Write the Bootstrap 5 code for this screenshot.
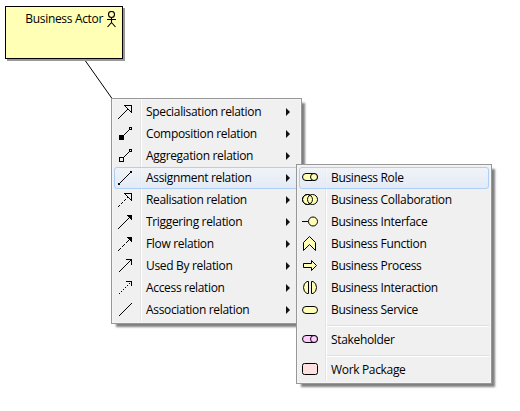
<!DOCTYPE html>
<html lang="en">
<head>
<meta charset="utf-8">
<title>Diagram relations</title>
<link href="https://cdn.jsdelivr.net/npm/bootstrap@5.3.0/dist/css/bootstrap.min.css" rel="stylesheet">
<style>
body{width:520px;height:411px;overflow:hidden;background:#fff;color:#000;font:12px/22px "Open Sans","Noto Sans",sans-serif;letter-spacing:-.33px}
.actor-node{left:5px;top:6px;width:118px;height:53px;border:1px solid #000;background:#ffffb5;box-shadow:2px 2px 0 #999;padding:1px 5px 0 0}
.actor-node svg{margin:3px 0 0 3px}
.link-line{left:84px;top:60px}
.ctx{min-width:0;margin:0;padding:2px;border:1px solid #979797;border-radius:0;background:linear-gradient(90deg,transparent 28px,#e2e3e3 28px,#e2e3e3 29px,#fff 29px,#fff 30px,transparent 30px) no-repeat 0 2px/100% calc(100% - 4px),#f0f0f0;box-shadow:inset 0 0 0 1px #f5f5f5,4px 4px 2px -1px rgba(0,0,0,.5);font-size:12px;color:#000}
.ctx-a{left:111px;top:98px;width:191px;height:226px}
.ctx-b{left:296px;top:164px;width:196px;height:220px}
.ctx .dropdown-item{height:22px;padding:0 8px 0 2px;line-height:20px;color:#000;border:1px solid transparent;border-radius:3px}
.ctx .dropdown-item.hot{border-color:#aecff7;background:linear-gradient(rgba(240,244,250,.8),rgba(224,233,247,.75))}
.ico{width:16px;height:16px;margin-right:13px;flex:none;overflow:visible;fill:none;stroke:#000;stroke-width:1}
.ctx-a .ico{shape-rendering:crispEdges}
.tri{width:4px;height:8px;fill:#111;margin-left:auto}
.y{fill:#ffffb5}
.pink{fill:#ffccff}
.rose{fill:#ffe0e0}
.sep{height:8px;margin:0 0 0 28px;padding-top:4px}
.sep::before{content:"";display:block;height:2px;background:linear-gradient(#e0e0e0 50%,#fff 50%)}
</style>
<script src="https://cdn.jsdelivr.net/npm/bootstrap@5.3.0/dist/js/bootstrap.bundle.min.js"></script>
</head>
<body class="position-relative m-0">
<svg class="link-line position-absolute" width="28" height="39"><path d="M1.500 1L28 38.500" stroke="#000"/></svg>
<div class="actor-node position-absolute d-flex justify-content-end align-items-start">
<span>Business Actor</span>
<svg width="11" height="17" fill="none" stroke="#000" stroke-width="1.100"><circle cx="5.500" cy="3.500" r="3"/><path d="M5.500 6.500V11.500L1.500 16M5.500 11.500L9.500 16M1 8.500H10"/></svg>
</div>

<div class="dropdown-menu show ctx ctx-a position-absolute">
<div class="dropdown-item d-flex align-items-center"><svg class="ico"><path d="M1 15L10.500 5.500M7.500 1.500H14.500V8.500Z"/></svg><span>Specialisation relation</span><svg class="tri"><path d="M0 0L4 4L0 8Z"/></svg></div>
<div class="dropdown-item d-flex align-items-center"><svg class="ico"><path d="M6.500 9.500L12.500 3.500"/><path fill="#000" d="M2.500 9.500h4v4h-4z"/><path d="M12.500 1.500h2v2h-2z"/></svg><span>Composition relation</span><svg class="tri"><path d="M0 0L4 4L0 8Z"/></svg></div>
<div class="dropdown-item d-flex align-items-center"><svg class="ico"><path d="M6.500 9.500L12.500 3.500M2.500 9.500h4v4h-4zM12.500 1.500h2v2h-2z"/></svg><span>Aggregation relation</span><svg class="tri"><path d="M0 0L4 4L0 8Z"/></svg></div>
<div class="dropdown-item hot d-flex align-items-center"><svg class="ico"><path d="M2 14L14 2"/><path fill="#000" stroke="none" d="M1 13h2v2H1zM13 1h2v2h-2z"/></svg><span>Assignment relation</span><svg class="tri"><path d="M0 0L4 4L0 8Z"/></svg></div>
<div class="dropdown-item d-flex align-items-center"><svg class="ico"><path stroke-dasharray="2.800 1.400" d="M1 15L10.500 5.500"/><path d="M7.500 1.500H14.500V8.500Z"/></svg><span>Realisation relation</span><svg class="tri"><path d="M0 0L4 4L0 8Z"/></svg></div>
<div class="dropdown-item d-flex align-items-center"><svg class="ico"><path d="M1 15L12 4"/><path fill="#000" d="M10.500 1.500h4v4z"/></svg><span>Triggering relation</span><svg class="tri"><path d="M0 0L4 4L0 8Z"/></svg></div>
<div class="dropdown-item d-flex align-items-center"><svg class="ico"><path stroke-dasharray="4.200 1.400" d="M1 15L12 4"/><path fill="#000" d="M10.500 1.500h4v4z"/></svg><span>Flow relation</span><svg class="tri"><path d="M0 0L4 4L0 8Z"/></svg></div>
<div class="dropdown-item d-flex align-items-center"><svg class="ico"><path d="M2 14L14.500 1.500M9 1.500H14.500V7"/></svg><span>Used By relation</span><svg class="tri"><path d="M0 0L4 4L0 8Z"/></svg></div>
<div class="dropdown-item d-flex align-items-center"><svg class="ico"><path stroke-dasharray="1.400 1.400" d="M2 14L14.500 1.500"/><path d="M9 1.500H14.500V6"/></svg><span>Access relation</span><svg class="tri"><path d="M0 0L4 4L0 8Z"/></svg></div>
<div class="dropdown-item d-flex align-items-center"><svg class="ico"><path d="M2 14L15 1"/></svg><span>Association relation</span><svg class="tri"><path d="M0 0L4 4L0 8Z"/></svg></div>
</div>

<div class="dropdown-menu show ctx ctx-b position-absolute">
<div class="dropdown-item hot d-flex align-items-center"><svg class="ico y"><rect x=".5" y="3.500" width="15" height="7" rx="3.500"/><ellipse cx="12" cy="7" rx="3.500" ry="3.500"/></svg><span>Business Role</span></div>
<div class="dropdown-item d-flex align-items-center"><svg class="ico y"><circle cx="5.500" cy="7.500" r="5"/><circle cx="10.500" cy="7.500" r="5"/><circle cx="5.500" cy="7.500" r="5" fill="none"/></svg><span>Business Collaboration</span></div>
<div class="dropdown-item d-flex align-items-center"><svg class="ico y"><path d="M0 7.500H6"/><circle cx="11" cy="7.500" r="4.500"/></svg><span>Business Interface</span></div>
<div class="dropdown-item d-flex align-items-center"><svg class="ico y"><path d="M1.500 6.500L7.500 .5L13.500 6.500V14.500L7.500 8.500L1.500 14.500Z"/></svg><span>Business Function</span></div>
<div class="dropdown-item d-flex align-items-center"><svg class="ico y"><path d="M1.500 5.500H9.500V2.500L14.500 7.500L9.500 12.500V9.500H1.500Z"/></svg><span>Business Process</span></div>
<div class="dropdown-item d-flex align-items-center"><svg class="ico y"><path d="M6.500 1.500H5Q1.500 3 1.500 7.500T5 13.500H6.500ZM9.500 1.500H11Q14.500 3 14.500 7.500T11 13.500H9.500Z"/></svg><span>Business Interaction</span></div>
<div class="dropdown-item d-flex align-items-center"><svg class="ico y"><rect x=".5" y="4.500" width="15" height="7" rx="3.500"/></svg><span>Business Service</span></div>
<div class="sep"></div>
<div class="dropdown-item d-flex align-items-center"><svg class="ico pink"><rect x=".5" y="3.500" width="15" height="7" rx="3.500"/><ellipse cx="12" cy="7" rx="3.500" ry="3.500"/></svg><span>Stakeholder</span></div>
<div class="sep"></div>
<div class="dropdown-item d-flex align-items-center"><svg class="ico rose"><rect x=".5" y="1.500" width="15" height="11" rx="2"/></svg><span>Work Package</span></div>
</div>
</body>
</html>
